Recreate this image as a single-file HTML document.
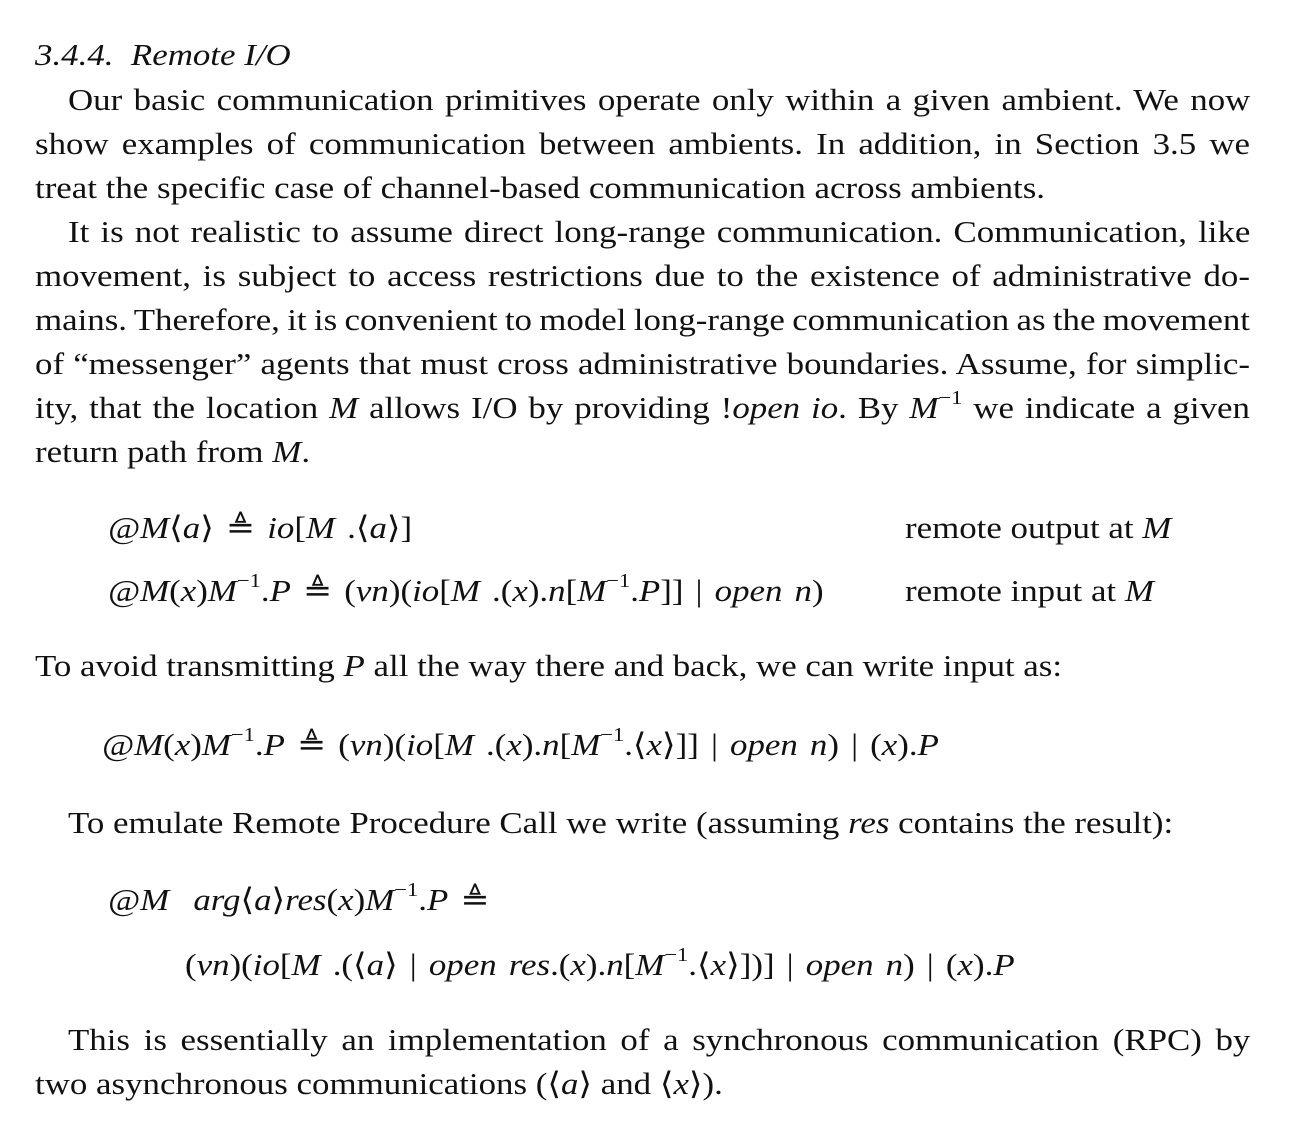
<!DOCTYPE html>
<html><head><meta charset="utf-8"><style>
body{margin:0;width:1312px;height:1128px;background:#fff;position:relative;overflow:hidden;font-family:"Liberation Serif","DejaVu Serif",serif;font-size:31px;color:#111}
.l{position:absolute;white-space:nowrap;line-height:36px;transform:scaleX(1.125);transform-origin:0 0}
.j{text-align:justify;text-align-last:justify;word-spacing:-3px}
i{font-style:italic}
sup{font-size:20px;line-height:0;vertical-align:14px}
.m{word-spacing:3px}
</style></head><body>
<div class="l" style="left:35px;top:37px"><i>3.4.4.&nbsp; Remote I/O</i></div>
<div class="l j" style="left:68px;top:82px;width:1051px">Our basic communication primitives operate only within a given ambient. We now</div>
<div class="l j" style="left:35px;top:126px;width:1080px">show examples of communication between ambients. In addition, in Section 3.5 we</div>
<div class="l" style="left:35px;top:170px">treat the specific case of channel-based communication across ambients.</div>
<div class="l j" style="left:68px;top:214px;width:1051px">It is not realistic to assume direct long-range communication. Communication, like</div>
<div class="l j" style="left:35px;top:258px;width:1080px">movement, is subject to access restrictions due to the existence of administrative do-</div>
<div class="l j" style="left:35px;top:302px;width:1080px">mains. Therefore, it is convenient to model long-range communication as the movement</div>
<div class="l j" style="left:35px;top:346px;width:1080px">of “messenger” agents that must cross administrative boundaries. Assume, for simplic-</div>
<div class="l j" style="left:35px;top:390px;width:1080px">ity, that the location <i>M</i> allows I/O by providing !<i>open io</i>. By <i>M</i><sup>−1</sup> we indicate a given</div>
<div class="l" style="left:35px;top:434px">return path from <i>M</i>.</div>

<div class="l m" style="left:108px;top:510px"><i>@M</i>⟨<i>a</i>⟩ ≜ <i>io</i>[<i>M</i> .⟨<i>a</i>⟩]</div>
<div class="l" style="left:905px;top:510px">remote output at <i>M</i></div>
<div class="l m" style="left:108px;top:573px"><i>@M</i>(<i>x</i>)<i>M</i><sup>−1</sup>.<i>P</i> ≜ (<i>vn</i>)(<i>io</i>[<i>M</i> .(<i>x</i>).<i>n</i>[<i>M</i><sup>−1</sup>.<i>P</i>]] | <i>open n</i>)</div>
<div class="l" style="left:905px;top:573px">remote input at <i>M</i></div>

<div class="l" style="left:35px;top:648px">To avoid transmitting <i>P</i> all the way there and back, we can write input as:</div>
<div class="l m" style="left:102px;top:727px"><i>@M</i>(<i>x</i>)<i>M</i><sup>−1</sup>.<i>P</i> ≜ (<i>vn</i>)(<i>io</i>[<i>M</i> .(<i>x</i>).<i>n</i>[<i>M</i><sup>−1</sup>.⟨<i>x</i>⟩]] | <i>open n</i>) | (<i>x</i>).<i>P</i></div>
<div class="l" style="left:68px;top:805px">To emulate Remote Procedure Call we write (assuming <i>res</i> contains the result):</div>
<div class="l m" style="left:108px;top:882px"><i>@M&nbsp; arg</i>⟨<i>a</i>⟩<i>res</i>(<i>x</i>)<i>M</i><sup>−1</sup>.<i>P</i> ≜</div>
<div class="l m" style="left:185px;top:947px">(<i>vn</i>)(<i>io</i>[<i>M</i> .(⟨<i>a</i>⟩ | <i>open res</i>.(<i>x</i>).<i>n</i>[<i>M</i><sup>−1</sup>.⟨<i>x</i>⟩])] | <i>open n</i>) | (<i>x</i>).<i>P</i></div>
<div class="l j" style="left:68px;top:1022px;width:1051px">This is essentially an implementation of a synchronous communication (RPC) by</div>
<div class="l" style="left:35px;top:1066px">two asynchronous communications (⟨<i>a</i>⟩ and ⟨<i>x</i>⟩).</div>
</body></html>
